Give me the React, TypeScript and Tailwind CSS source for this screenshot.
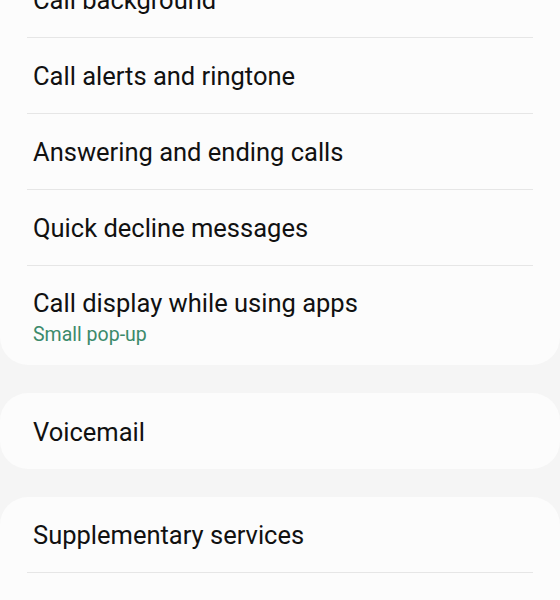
const groups: { title: string; sub?: string }[][] = [
  [
    { title: "Call background" },
    { title: "Call alerts and ringtone" },
    { title: "Answering and ending calls" },
    { title: "Quick decline messages" },
    { title: "Call display while using apps", sub: "Small pop-up" },
  ],
  [{ title: "Voicemail" }],
  [{ title: "Supplementary services" }],
];

function Row({ title, sub, divider }: { title: string; sub?: string; divider: boolean }) {
  return (
    <div className="px-[27px]">
      <div className={`flex flex-col justify-center px-[6px] ${sub ? "h-[99px] pt-[3px]" : "h-[76px] pt-[1px]"} ${divider ? "border-b border-[#e6e6e6]" : ""}`}>
        <span className="text-[25.5px] leading-[30px] text-[#111111]">{title}</span>
        {sub && <span className="text-[19.5px] leading-[24px] text-[#3b8a6b] mt-[5px]">{sub}</span>}
      </div>
    </div>
  );
}

export default function App() {
  return (
    <div
      className="h-[600px] overflow-hidden bg-[#f5f5f5]"
      style={{ fontFamily: "Roboto, 'Noto Sans', sans-serif" }}
    >
      <div className="-mt-[38px] flex flex-col gap-[28px]">
        {groups.map((g, gi) => (
          <div key={gi} className="rounded-[28px] bg-[#fcfcfc]">
            {g.map((r, i) => (
              <Row key={r.title} title={r.title} sub={r.sub} divider={i < g.length - 1 || gi === 2} />
            ))}
            {gi === 2 && <div className="h-[60px]" />}
          </div>
        ))}
      </div>
    </div>
  );
}
